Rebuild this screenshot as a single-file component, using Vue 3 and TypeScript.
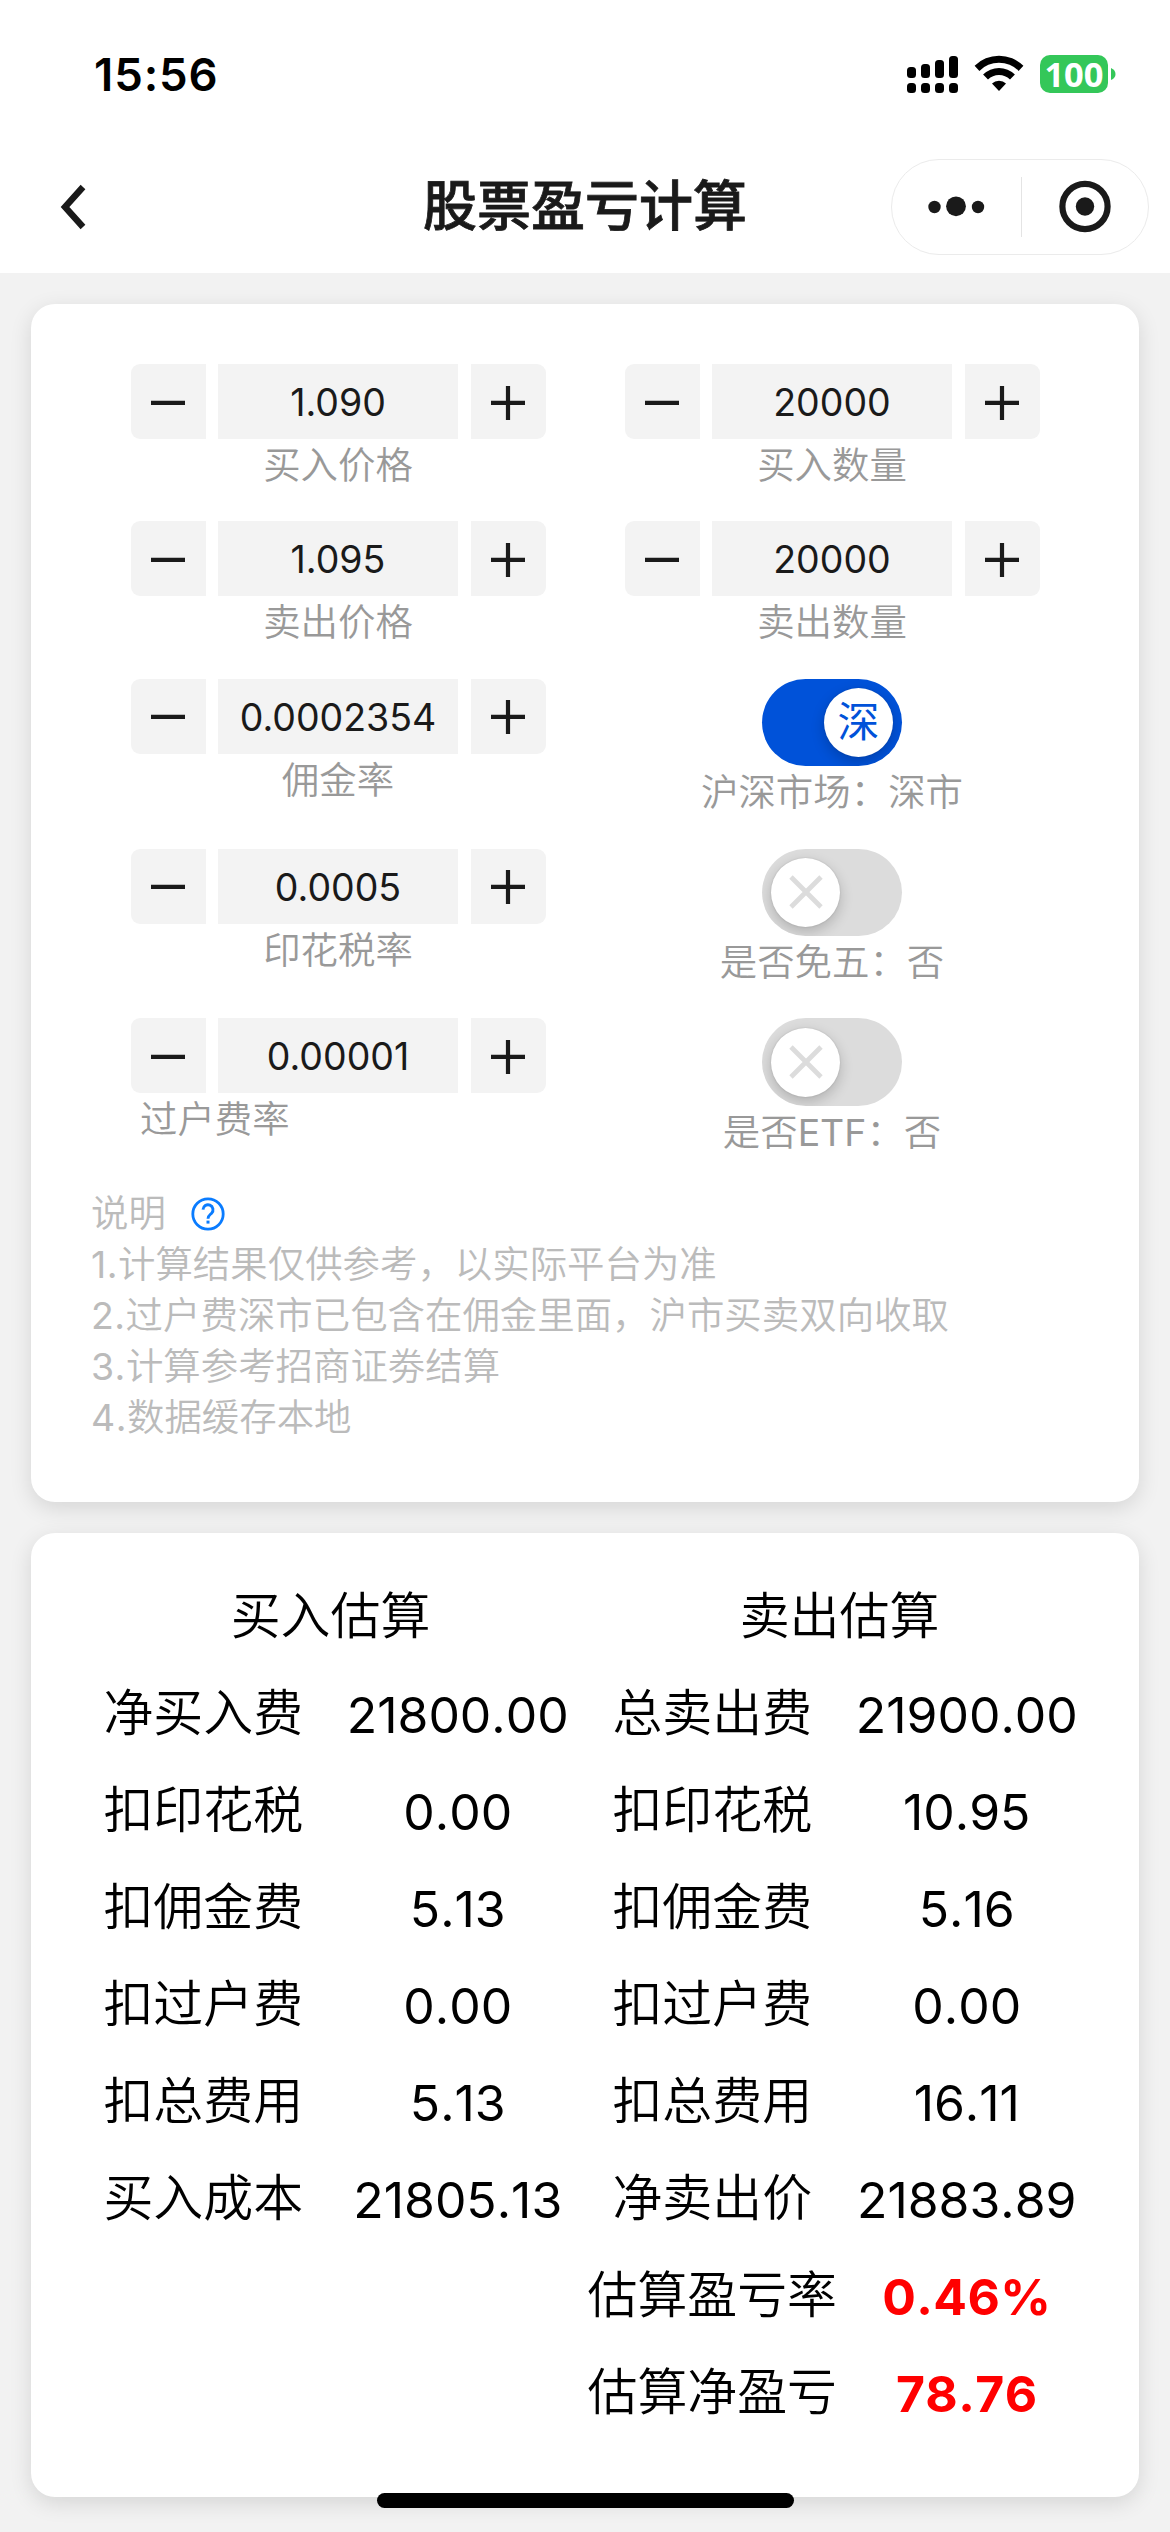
<script setup lang="ts">
interface StepperField {
  kind: 'stepper'
  value: string
  label: string
  alignStart?: boolean
}

interface SwitchField {
  kind: 'switch'
  on: boolean
  label: string
}

type Field = StepperField | SwitchField

const fieldRows: Field[][] = [
  [
    { kind: 'stepper', value: '1.090', label: '买入价格' },
    { kind: 'stepper', value: '20000', label: '买入数量' },
  ],
  [
    { kind: 'stepper', value: '1.095', label: '卖出价格' },
    { kind: 'stepper', value: '20000', label: '卖出数量' },
  ],
  [
    { kind: 'stepper', value: '0.0002354', label: '佣金率' },
    { kind: 'switch', on: true, label: '沪深市场：深市' },
  ],
  [
    { kind: 'stepper', value: '0.0005', label: '印花税率' },
    { kind: 'switch', on: false, label: '是否免五：否' },
  ],
  [
    { kind: 'stepper', value: '0.00001', label: '过户费率', alignStart: true },
    { kind: 'switch', on: false, label: '是否ETF：否' },
  ],
]

const notes: string[] = [
  '1.计算结果仅供参考，以实际平台为准',
  '2.过户费深市已包含在佣金里面，沪市买卖双向收取',
  '3.计算参考招商证劵结算',
  '4.数据缓存本地',
]

// Splits a string into Latin and Chinese runs, which carry different weights.
const runs = (text: string): { text: string; latin: boolean }[] =>
  text
    .split(/([A-Za-z0-9.]+)/)
    .filter((part) => part !== '')
    .map((part) => ({ text: part, latin: /^[A-Za-z0-9.]/.test(part) }))

interface ResultRow {
  cells: [string, string, string, string]
  highlight?: boolean
}

const results: ResultRow[] = [
  { cells: ['净买入费', '21800.00', '总卖出费', '21900.00'] },
  { cells: ['扣印花税', '0.00', '扣印花税', '10.95'] },
  { cells: ['扣佣金费', '5.13', '扣佣金费', '5.16'] },
  { cells: ['扣过户费', '0.00', '扣过户费', '0.00'] },
  { cells: ['扣总费用', '5.13', '扣总费用', '16.11'] },
  { cells: ['买入成本', '21805.13', '净卖出价', '21883.89'] },
  { cells: ['', '', '估算盈亏率', '0.46%'], highlight: true },
  { cells: ['', '', '估算净盈亏', '78.76'], highlight: true },
]
</script>

<template>
  <div class="page">
    <header class="top">
      <div class="status">
        <span class="time">15:56</span>
        <div class="status-icons">
          <svg class="signal" width="51" height="38" viewBox="0 0 51 38">
            <rect x="0" y="12" width="9" height="11" rx="3.5" />
            <rect x="14" y="9" width="9" height="14" rx="3.5" />
            <rect x="28" y="5" width="9" height="18" rx="3.5" />
            <rect x="42" y="1" width="9" height="22" rx="3.5" />
            <rect v-for="i in 4" :key="i" :x="(i - 1) * 14" y="28" width="9" height="10" rx="3.5" />
          </svg>
          <svg class="wifi" width="50" height="38" viewBox="0 0 50 38">
            <path d="M0.6 10.8a34.6 34.6 0 0 1 48.8 0L44.6 15.9a27.6 27.6 0 0 0-39.2 0z" />
            <path d="M9.1 19.6a22.6 22.6 0 0 1 31.8 0L36 24.6a15.6 15.6 0 0 0-22 0z" />
            <path d="M18 28.6a9.9 9.9 0 0 1 14 0L25 36z" />
          </svg>
          <div class="battery">100</div>
          <svg class="nub" width="5" height="12" viewBox="0 0 5 12">
            <path d="M0 0Q4.5 2 4.5 6T0 12z" fill="#34c759" />
          </svg>
        </div>
      </div>
      <div class="nav">
        <svg class="back" width="28" height="46" viewBox="0 0 28 46">
          <path d="M25 3L7 23L25 43" fill="none" stroke="#1a1a1a" stroke-width="6.4" />
        </svg>
        <h1 class="title">股票盈亏计算</h1>
        <div class="capsule">
          <svg width="129" height="60" viewBox="0 0 129 60">
            <circle cx="42.5" cy="30" r="6.2" />
            <circle cx="64" cy="29.3" r="9.9" />
            <circle cx="86" cy="30" r="6.2" />
          </svg>
          <i class="divider"></i>
          <svg width="126" height="60" viewBox="0 0 126 60">
            <circle cx="63" cy="29.5" r="22.6" fill="none" stroke="#1a1a1a" stroke-width="6.2" />
            <circle cx="63" cy="29.5" r="9.2" />
          </svg>
        </div>
      </div>
    </header>

    <main class="content">
      <section class="card form">
        <div v-for="(row, r) in fieldRows" :key="r" class="field-row">
          <div v-for="(field, c) in row" :key="c" class="field">
            <div v-if="field.kind === 'stepper'" class="stepper">
              <div class="step minus">
                <svg width="36" height="36" viewBox="0 0 36 36"><path d="M1 18.8h34" /></svg>
              </div>
              <div class="value">{{ field.value }}</div>
              <div class="step plus">
                <svg width="36" height="36" viewBox="0 0 36 36"><path d="M1 18.8h34M18 2v34" /></svg>
              </div>
            </div>
            <div v-else class="switch" :class="{ on: field.on }">
              <div class="knob">
                <span v-if="field.on">深</span>
                <svg v-else width="34" height="34" viewBox="0 0 34 34">
                  <path d="M2 2l30 30M32 2L2 32" fill="none" stroke="#dcdcdc" stroke-width="4.8" />
                </svg>
              </div>
            </div>
            <div class="label" :class="{ start: field.kind === 'stepper' && field.alignStart }">
              <span v-for="(run, i) in runs(field.label)" :key="i" :class="{ latin: run.latin }">{{ run.text }}</span>
            </div>
          </div>
        </div>

        <div class="notes">
          <div class="notes-head">
            <span>说明</span>
            <svg class="help" width="34" height="34" viewBox="0 0 34 34" fill="none" stroke="#0a7cff">
              <circle cx="17" cy="17" r="15.2" stroke-width="2.8" />
              <path d="M12 12.6a5 5 0 1 1 8.6 3.6c-1.8 1.8-3.6 2.5-3.6 5.5" stroke-width="2.9" />
              <path d="M17 23.6v3" stroke-width="3" />
            </svg>
          </div>
          <div v-for="note in notes" :key="note" class="note">
            <span v-for="(run, i) in runs(note)" :key="i" :class="{ latin: run.latin }">{{ run.text }}</span>
          </div>
        </div>
      </section>

      <section class="card result">
        <div class="result-row heads">
          <div class="head">买入估算</div>
          <div class="head">卖出估算</div>
        </div>
        <div v-for="(row, r) in results" :key="r" class="result-row">
          <div
            v-for="(cell, c) in row.cells"
            :key="c"
            class="cell"
            :class="{ num: c % 2 === 1, profit: row.highlight && c === 3 }"
          >{{ cell }}</div>
        </div>
      </section>
    </main>
    <div class="home-bar"></div>
  </div>
</template>

<style>
body {
  margin: 0;
  background: #f2f2f2;
}
</style>

<style scoped>
.page {
  position: relative;
  box-sizing: border-box;
  width: 1170px;
  height: 2532px;
  overflow: hidden;
  background: #f2f2f2;
  color: #000;
  font-family: Inter, "Noto Sans CJK SC", sans-serif;
}
svg {
  display: block;
  flex: none;
}
.top {
  height: 273px;
  background: #fff;
}
.status {
  display: flex;
  justify-content: space-between;
  box-sizing: border-box;
  height: 141px;
  padding: 47px 54px 0 94px;
}
.time {
  height: 54px;
  font-size: 45.5px;
  font-weight: 600;
  line-height: 55px;
  letter-spacing: 0.9px;
}
.status-icons {
  display: flex;
  align-items: center;
  height: 54px;
}
.wifi {
  margin: 0 16px 0 16px;
}
.battery {
  width: 68px;
  height: 38px;
  border-radius: 10px;
  background: #34c759;
  color: #fff;
  font-family: "Noto Sans", sans-serif;
  font-size: 34.5px;
  font-weight: 700;
  line-height: 38px;
  text-align: center;
}
.nub {
  margin-left: 3px;
}
.nav {
  display: grid;
  grid-template-columns: 320px 1fr 320px;
  align-items: center;
  height: 132px;
}
.back {
  margin-left: 58px;
}
.title {
  margin: 0;
  color: #1a1a1a;
  font-size: 54px;
  font-weight: 500;
  line-height: 80px;
  text-align: center;
  -webkit-text-stroke: 0.8px #1a1a1a;
}
.capsule {
  display: flex;
  align-items: center;
  justify-self: end;
  box-sizing: border-box;
  width: 258px;
  height: 96px;
  margin-right: 21px;
  border: 1px solid #ebebeb;
  border-radius: 48px;
  fill: #1a1a1a;
}
.divider {
  width: 1px;
  height: 60px;
  background: #e4e4e4;
}
.content {
  display: flex;
  flex-direction: column;
  gap: 31px;
  padding: 31px 31px 0;
}
.card {
  box-sizing: border-box;
  width: 1108px;
  border-radius: 24px;
  background: #fff;
  box-shadow: 0 6px 22px rgba(0, 0, 0, 0.12);
}
.form {
  height: 1198px;
  padding: 60px 60px 0;
}
.field-row {
  display: flex;
  padding-bottom: 30px;
}
.field {
  display: flex;
  flex: 1;
  flex-direction: column;
  align-items: center;
}
.stepper {
  display: flex;
  gap: 12.5px;
}
.step {
  display: flex;
  align-items: center;
  justify-content: center;
  width: 75px;
  height: 75px;
  background: #f3f3f3;
}
.step path {
  fill: none;
  stroke: #1a1a1a;
  stroke-width: 4.2;
}
.minus {
  border-radius: 9px 0 0 9px;
}
.plus {
  border-radius: 0 9px 9px 0;
}
.value {
  width: 240px;
  height: 75px;
  background: #f3f3f3;
  color: #1a1a1a;
  font-size: 37.5px;
  line-height: 78px;
  text-align: center;
}
.label {
  display: flex;
  height: 52.4px;
  color: #999;
  font-size: 37.44px;
  font-weight: 350;
  line-height: 54.4px;
  white-space: nowrap;
}
.label.start {
  align-self: flex-start;
  margin-left: 49px;
}
.latin {
  font-weight: 400;
}
.switch {
  display: flex;
  align-items: center;
  box-sizing: border-box;
  width: 140px;
  height: 87.4px;
  padding: 0 9px;
  border-radius: 44px;
  background: #dcdcdc;
  overflow: hidden;
}
.switch.on {
  justify-content: flex-end;
  background: #0052d9;
}
.knob {
  display: flex;
  align-items: center;
  justify-content: center;
  width: 69px;
  height: 69px;
  border-radius: 50%;
  background: #fff;
  box-shadow: 0 5px 14px rgba(0, 0, 0, 0.2), 0 0 2px rgba(0, 0, 0, 0.15);
  color: #0052d9;
  font-size: 42px;
  line-height: 60px;
}
.notes {
  color: #bbb;
  font-size: 37.44px;
  font-weight: 350;
  line-height: 51px;
  white-space: nowrap;
  font-kerning: none;
}
.notes-head {
  display: flex;
  align-items: center;
  gap: 25px;
}
.note {
  display: flex;
}
.note .latin {
  letter-spacing: 0.5px;
}
.result {
  height: 964px;
  padding: 35px 45px 0;
}
.result-row {
  display: grid;
  grid-template-columns: repeat(4, 1fr);
  height: 97px;
  font-size: 49.92px;
  font-weight: 350;
  line-height: 97px;
  text-align: center;
  white-space: nowrap;
}
.heads {
  grid-template-columns: 1fr 1fr;
}
.num {
  font-weight: 400;
  line-height: 101px;
  font-kerning: none;
}
.num.profit {
  color: #f00;
  font-weight: 700;
  letter-spacing: 0.4px;
}
.home-bar {
  position: absolute;
  bottom: 24px;
  left: 377px;
  width: 417px;
  height: 15px;
  border-radius: 8px;
  background: #000;
}
</style>
